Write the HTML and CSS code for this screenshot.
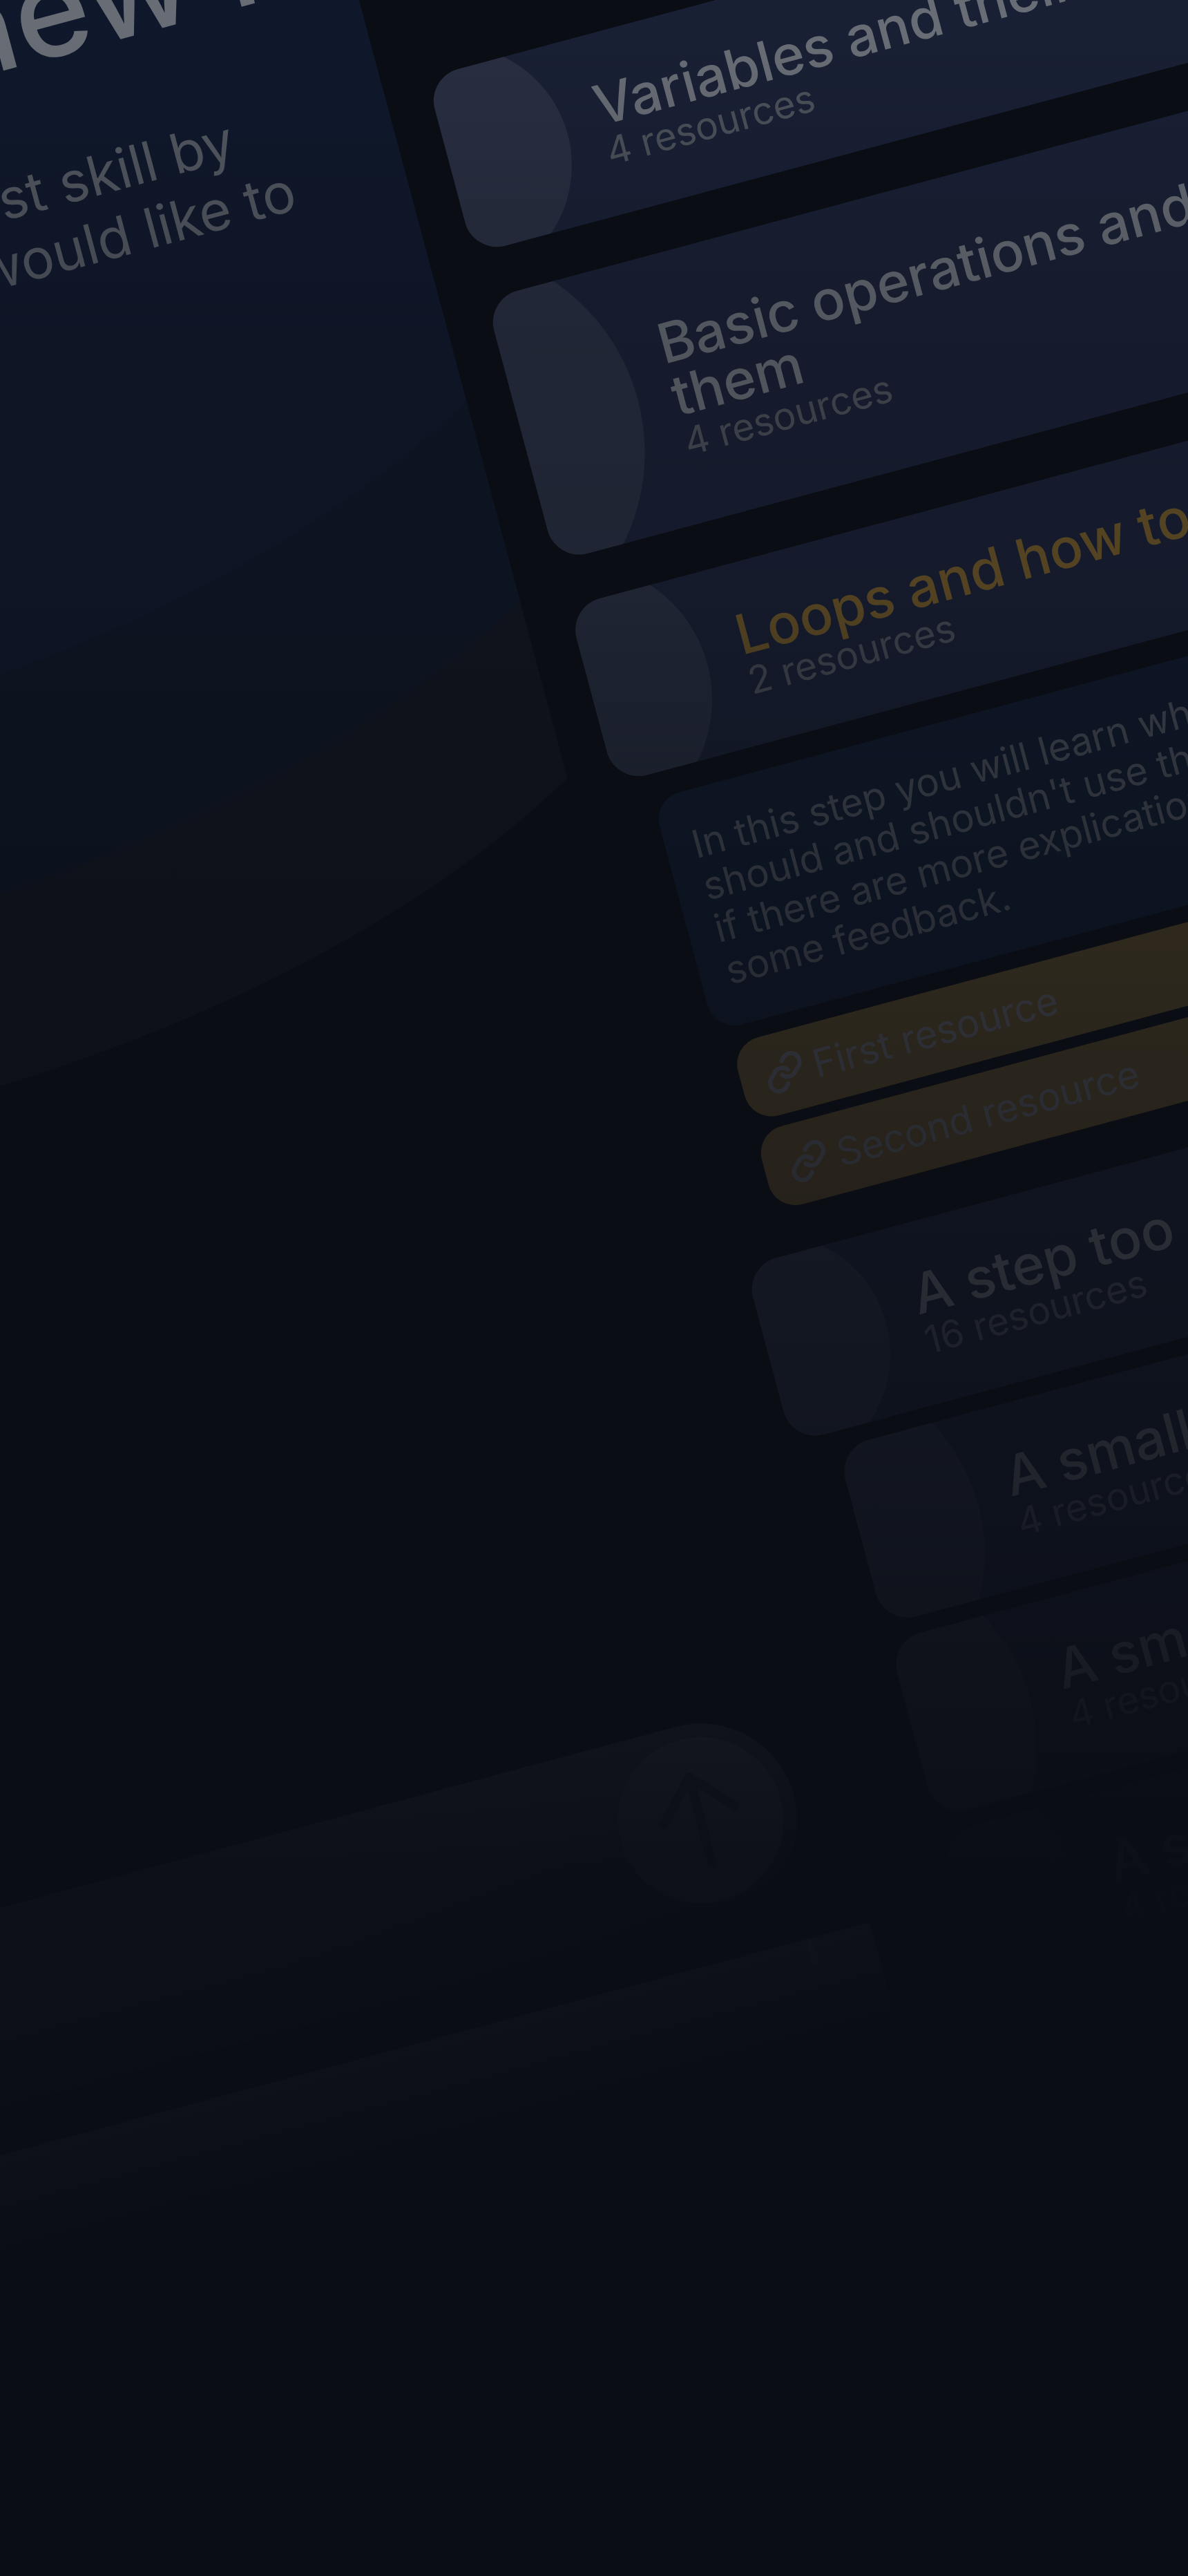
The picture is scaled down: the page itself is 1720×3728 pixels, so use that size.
FILE: index.html
```html
<!DOCTYPE html>
<html lang="en">
<head>
    <meta charset="UTF-8">
    <meta name="viewport" content="width=device-width, initial-scale=1.0">
    <title>New roadmap</title>
    <link rel="stylesheet" href="styles.css">
</head>
<body>
    <div class="page">
        <div class="stage">
            <!-- Left column: intro panel and prompt -->
            <section class="intro">
                <div class="hero">
                    <h1 class="hero-title">new roadmap</h1>
                    <p class="hero-sub">
                        <span class="hero-line-short">latest skill by</span>
                        <span>you would like to</span>
                    </p>
                </div>
                <div class="prompt">
                    <button class="prompt-send" type="button" aria-label="Send">
                        <svg viewBox="0 0 24 24" fill="none" stroke="currentColor" stroke-width="1.5" stroke-linecap="round" stroke-linejoin="round">
                            <path d="M12 19V5"/>
                            <path d="M6.2 11.2 12 5l5.8 6.2"/>
                        </svg>
                    </button>
                </div>
                <div class="prompt-foot"><span class="prompt-foot-mark"></span></div>
            </section>

            <!-- Right column: roadmap steps -->
            <section class="steps">
                <div class="step">
                    <h2 class="step-title">Variables and their types</h2>
                    <p class="step-count">4 resources</p>
                </div>
                <div class="step step-tall">
                    <h2 class="step-title">Basic operations and how to use<br>them</h2>
                    <p class="step-count">4 resources</p>
                </div>
                <div class="step step-open">
                    <h2 class="step-title step-title-active">Loops and how to use them</h2>
                    <p class="step-count">2 resources</p>
                </div>
                <div class="step-detail">
                    In this step you will learn when you<br>
                    should and shouldn't use them, and<br>
                    if there are more explications, give us<br>
                    some feedback.
                </div>
                <a class="resource" href="#">
                    <svg class="resource-icon" viewBox="0 0 24 24" fill="none" stroke="currentColor" stroke-width="2.5" stroke-linecap="round" stroke-linejoin="round">
                        <path d="M10 13a5 5 0 0 0 7.54.54l3-3a5 5 0 0 0-7.07-7.07l-1.72 1.71"/>
                        <path d="M14 11a5 5 0 0 0-7.54-.54l-3 3a5 5 0 0 0 7.07 7.07l1.71-1.71"/>
                    </svg>
                    First resource
                </a>
                <a class="resource resource-last" href="#">
                    <svg class="resource-icon" viewBox="0 0 24 24" fill="none" stroke="currentColor" stroke-width="2.5" stroke-linecap="round" stroke-linejoin="round">
                        <path d="M10 13a5 5 0 0 0 7.54.54l3-3a5 5 0 0 0-7.07-7.07l-1.72 1.71"/>
                        <path d="M14 11a5 5 0 0 0-7.54-.54l-3 3a5 5 0 0 0 7.07 7.07l1.71-1.71"/>
                    </svg>
                    Second resource
                </a>
                <div class="step step-parent">
                    <h2 class="step-title">A step too complex</h2>
                    <p class="step-count">16 resources</p>
                </div>
                <div class="step step-sub">
                    <h2 class="step-title">A smaller step</h2>
                    <p class="step-count">4 resources</p>
                </div>
                <div class="step step-sub">
                    <h2 class="step-title">A smaller step</h2>
                    <p class="step-count">4 resources</p>
                </div>
                <div class="step step-sub step-faded">
                    <h2 class="step-title">A smaller step</h2>
                    <p class="step-count">4 resources</p>
                </div>
            </section>
        </div>
        <div class="fade"></div>
    </div>
</body>
</html>
```

FILE: styles.css
```css
/* Tilted app preview fading into the page background */
body {
    margin: 0;
    background-color: #0a0d14;
    font-family: "Inter", "Open Sans", sans-serif;
}
h1, h2, p {
    margin: 0;
}

.page {
    position: relative;
    width: 1720px;
    height: 3728px;
    overflow: hidden;
}

.stage {
    display: flex;
    align-items: flex-start;
    width: 3600px;
    margin-top: -300px;
    transform: rotate(-15deg);
    transform-origin: 0 300px;
}

/* darkens everything, stronger towards the bottom */
.fade {
    position: absolute;
    inset: 0;
    background: linear-gradient(
        to bottom,
        rgba(10, 13, 20, 0.52) 50px,
        rgba(10, 13, 20, 0.645) 500px,
        rgba(10, 13, 20, 0.66) 850px,
        rgba(10, 13, 20, 0.7) 950px,
        rgba(10, 13, 20, 0.763) 1250px,
        rgba(10, 13, 20, 0.81) 1560px,
        rgba(10, 13, 20, 0.848) 1850px,
        rgba(10, 13, 20, 0.894) 2200px,
        rgba(10, 13, 20, 0.935) 2430px,
        rgba(10, 13, 20, 0.98) 2700px
    );
}

/* Left column */
.intro {
    flex: none;
    width: 2002px;
    margin-left: -1500px;
}

.hero {
    box-sizing: border-box;
    height: 1820px;
    padding-top: 237px;
    background:
        radial-gradient(1300px 605px at 1000px 650px, #152445 99.9%, transparent 100%),
        radial-gradient(1300px 605px at 1000px 950px, #12223a 99.9%, transparent 100%),
        radial-gradient(1300px 605px at 1000px 1215px, #1a1f2a 99.9%, transparent 100%);
}

.hero-title {
    padding-left: 1400px;
    font-size: 186px;
    font-weight: 500;
    line-height: 192px;
    color: #cfd5de;
    white-space: nowrap;
}

.hero-sub {
    margin-top: 105px;
    padding-right: 162px;
    font-size: 80px;
    line-height: 94px;
    color: #a2a9b5;
    text-align: right;
}
.hero-sub span {
    display: block;
}
.hero-line-short {
    padding-right: 67px;
}

.prompt {
    display: flex;
    justify-content: flex-end;
    box-sizing: border-box;
    width: 1938px;
    height: 280px;
    margin-top: 1147px;
    padding: 20px;
    border-radius: 140px;
    background:
        linear-gradient(to bottom, transparent 40%, rgba(10, 13, 20, 0.7)),
        linear-gradient(to right, #9a9ea2 60%, #6a6e74);
}
.prompt-send {
    display: flex;
    align-items: center;
    justify-content: center;
    width: 240px;
    height: 240px;
    padding: 0;
    border: none;
    border-radius: 50%;
    background-color: #b0b4b8;
    color: #5a5e64;
}
.prompt-send svg {
    width: 220px;
    height: 220px;
}

.prompt-foot {
    display: flex;
    justify-content: flex-end;
    box-sizing: border-box;
    width: 1996px;
    height: 170px;
    margin-top: 66px;
    padding: 3px 85px 0 0;
    background: linear-gradient(to bottom, #b4b8bc, transparent);
}
.prompt-foot-mark {
    width: 12px;
    height: 40px;
    border-radius: 50%;
    background-color: #ffffff;
}

/* Right column */
.steps {
    flex: none;
    width: 1400px;
    margin-left: 65px;
    padding-top: 568px;
}

.step {
    --blob: circle 175px at 2px 50%;
    display: flex;
    flex-direction: column;
    justify-content: center;
    box-sizing: border-box;
    height: 265px;
    margin-bottom: 67px;
    padding-left: 225px;
    border-radius: 48px;
    background:
        radial-gradient(var(--blob), rgba(255, 255, 255, 0.15) 99.5%, transparent 100%),
        #293558;
}
.step-tall {
    --blob: circle 299px at -123px 50%;
    height: 394px;
}
.step-open {
    --blob: circle 199px at -25px 50%;
    margin-bottom: 36px;
}
.step-parent {
    margin-bottom: 24px;
}
.step-sub {
    --blob: circle 273px at -96px 50%;
    margin-bottom: 24px;
    margin-left: 61px;
}
.step-faded {
    opacity: 0.55;
}

.step-title {
    font-size: 80px;
    font-weight: 500;
    line-height: 78px;
    color: #cfd5de;
    white-space: nowrap;
}
.step-title-active {
    color: #e0aa3c;
}
.step-count {
    font-size: 55px;
    line-height: 58px;
    color: #959ba6;
}

.step-detail {
    box-sizing: border-box;
    margin: 0 0 24px 46px;
    padding: 48px 0 48px 39px;
    border-radius: 40px;
    background-color: #162a4c;
    font-size: 56px;
    line-height: 63px;
    color: #989ea9;
    white-space: nowrap;
}

.resource {
    display: flex;
    align-items: center;
    gap: 13px;
    box-sizing: border-box;
    height: 117px;
    margin: 0 0 16px 64px;
    padding-left: 35px;
    border-radius: 40px;
    background-color: #b08a3e;
    font-size: 56px;
    color: #b8b8ba;
    text-decoration: none;
    white-space: nowrap;
}
.resource-last {
    margin-bottom: 65px;
}
.resource-icon {
    flex: none;
    width: 60px;
    height: 60px;
}
```
